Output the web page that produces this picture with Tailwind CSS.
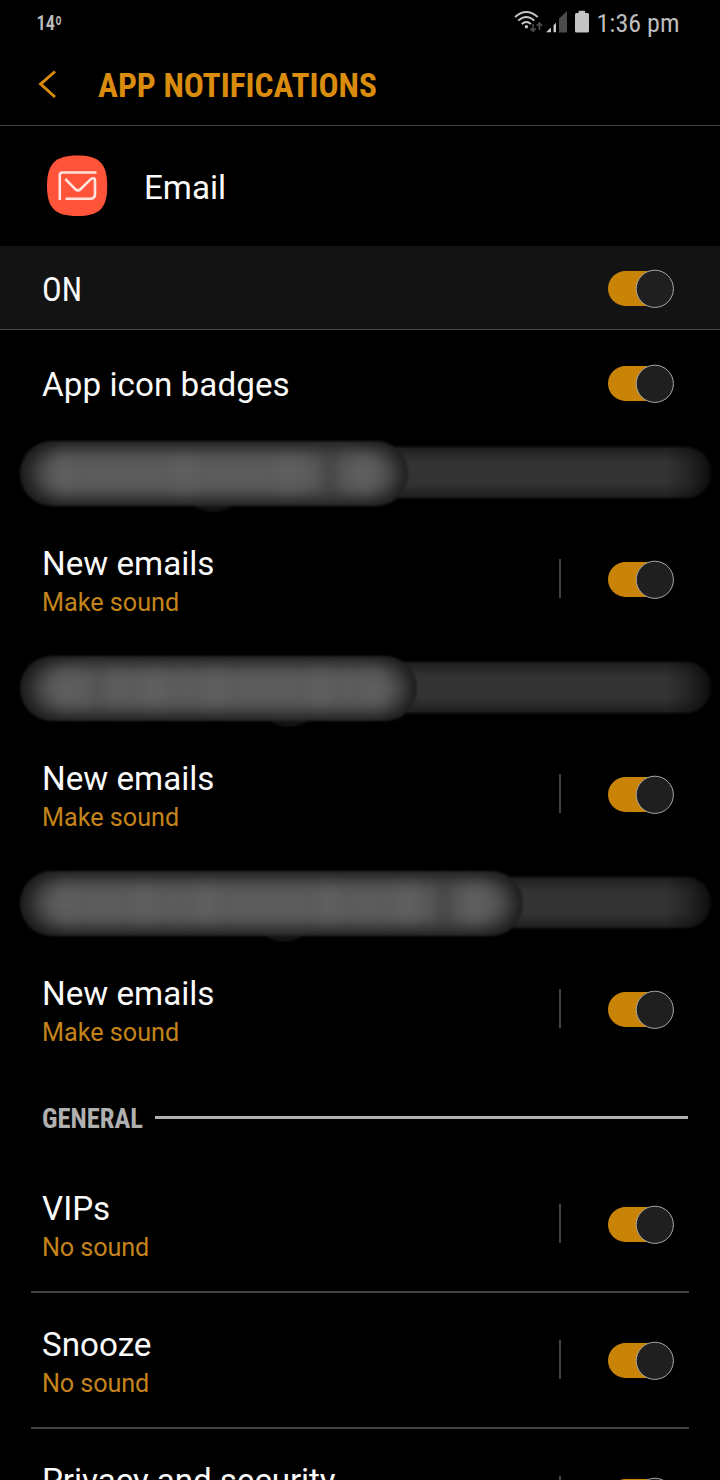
<!DOCTYPE html>
<html lang="en">
<head>
<meta charset="utf-8">
<title>App notifications</title>
<script src="https://cdn.jsdelivr.net/npm/@tailwindcss/browser@4"></script>
</head>
<body class="bg-black">
<svg width="0" height="0" class="absolute">
  <defs>
    <linearGradient id="barH" gradientUnits="userSpaceOnUse" x1="300" y1="0" x2="712" y2="0">
      <stop offset="0" stop-color="#333"/><stop offset=".89" stop-color="#333"/><stop offset=".95" stop-color="#222"/><stop offset="1" stop-color="#0c0c0c"/>
    </linearGradient>
    <linearGradient id="barV" x1="0" y1="0" x2="0" y2="1">
      <stop offset="0" stop-color="#000" stop-opacity=".4"/><stop offset=".3" stop-color="#000" stop-opacity="0"/><stop offset=".7" stop-color="#000" stop-opacity="0"/><stop offset="1" stop-color="#000" stop-opacity=".4"/>
    </linearGradient>
    <filter id="soft" x="-5%" y="-20%" width="110%" height="140%" color-interpolation-filters="sRGB"><feGaussianBlur stdDeviation="1.2"/></filter>
    <filter id="glow" x="-10%" y="-60%" width="120%" height="220%" color-interpolation-filters="sRGB"><feGaussianBlur stdDeviation="12 9"/></filter>
    <filter id="streak" x="-100%" y="-60%" width="300%" height="220%" color-interpolation-filters="sRGB"><feGaussianBlur stdDeviation="7"/></filter>
    <symbol id="toggle" viewBox="0 0 67 40">
      <rect x="1" y="3.100" width="56" height="34.8" rx="17.4" fill="#c98407"/>
      <circle cx="47.8" cy="20.8" r="18.6" fill="#1f1f1f" stroke="#a8a8a8" stroke-width="1"/>
    </symbol>
  </defs>
</svg>
<main class="w-[720px] h-[1480px] overflow-hidden bg-black text-[#fafafa] font-['Roboto',sans-serif] flex flex-col [&>*]:shrink-0">
  <div class="h-[47px] flex justify-between">
    <svg width="120" height="47" font-family="'Roboto Condensed',Roboto,sans-serif" fill="#bdbdbd"><text x="36.500" y="30" font-size="19.5" font-weight="600" textLength="18.500" lengthAdjust="spacingAndGlyphs">14</text><text x="55" y="32" font-size="23" font-weight="500" textLength="7" lengthAdjust="spacingAndGlyphs">º</text></svg>
    <svg width="220" height="47">
      <g fill="none" stroke="#c4c4c4" stroke-width="1.9">
        <path d="M15 17Q26.3 6.800 37.700 17"/><path d="M18.300 20.600Q26.300 13.300 34.300 20.600"/><path d="M21.800 24Q26.300 20 30.900 24"/>
      </g>
      <circle cx="26.400" cy="26.700" r="1.700" fill="#c4c4c4"/>
      <g fill="none" stroke="#4b4b4b" stroke-width="1.700"><path d="M33 24v7M30.300 28.300l2.700 2.900 2.700-2.900M39.500 30v-7M36.800 25.900l2.700-2.900 2.700 2.900"/></g>
      <path d="M46 32.300L51 27.500V32.300ZM53.500 25.200L56 22.700V32.300H53.500Z" fill="#c8c8c8"/>
      <path d="M59 18.500L67 11V32.500H59Z" fill="#4b4b4b"/>
      <path d="M75 14.500q0-1.500 1.500-1.500H78.500V12q0-1.200 1.200-1.200H84q1.200 0 1.200 1.200V13H87.500q1.500 0 1.500 1.500V31q0 1.500-1.500 1.500H76.500q-1.500 0-1.500-1.500Z" fill="#c4c4c4"/>
      <text x="96.500" y="32" font-family="'Roboto Condensed',Roboto,sans-serif" font-size="26.5" fill="#bdbdbd" textLength="83" lengthAdjust="spacingAndGlyphs">1:36 pm</text>
    </svg>
  </div>
  <header class="h-[79px] border-b border-[#444]">
    <svg width="400" height="78">
      <path d="M55 24.500L40.600 37.100L55 50" fill="none" stroke="#d98c0d" stroke-width="2.900"/>
      <text x="98" y="50" font-family="'Roboto Condensed',Roboto,sans-serif" font-size="33" font-weight="700" fill="#d98c0d" textLength="279" lengthAdjust="spacingAndGlyphs">APP NOTIFICATIONS</text>
    </svg>
  </header>
  <section class="h-[120px] flex items-center pl-[46px]">
    <svg width="62" height="62" class="block">
      <path d="M31 .500C53 .500 61.200 8 61.200 31S53 61 31 61 1 53 1 31 9 .500 31 .500Z" fill="#ff543a"/>
      <g fill="none" stroke="#ffe3dc" stroke-width="2.600" stroke-linejoin="round" transform="translate(0 3.700)"><path d="M50.500 13.800H16.200Q13.800 13.800 13.800 16.200V41.300"/><path d="M19.300 20.300L29.500 30.600Q32 33 34.500 30.600L44.800 20.400Q49 18 49 21.900V35.200Q49 40 44 40H19.500"/></g>
    </svg>
    <div class="pl-[36px] pt-[3px] text-[33.200px] leading-10">Email</div>
  </section>
  <section class="h-[84px] bg-[#131313] border-b border-[#444] flex items-center justify-between pl-[42px] pr-[46px]">
    <svg width="60" height="50"><text x="0" y="38" font-family="'Roboto Condensed',Roboto,sans-serif" font-size="34" fill="#fafafa" textLength="40" lengthAdjust="spacingAndGlyphs">ON</text></svg>
    <svg width="67" height="40" class="mt-px"><use href="#toggle"/></svg>
  </section>
  <section class="h-[101px] flex items-center justify-between pl-[42px] pr-[46px] pt-[5px]">
    <div class="text-[33.200px] leading-10 tracking-[0.06px] pt-[3px]">App icon badges</div>
    <svg width="67" height="40"><use href="#toggle"/></svg>
  </section>

  <svg width="720" height="81" class="block">
    <clipPath id="c1"><rect x="20" y="10" width="388" height="65" rx="32"/></clipPath>
    <g filter="url(#soft)"><rect x="300" y="16" width="411" height="51" rx="25" fill="url(#barH)"/><rect x="300" y="16" width="411" height="51" rx="25" fill="url(#barV)"/>
    <circle cx="213" cy="49" r="32" fill="#131313"/>
    <g clip-path="url(#c1)"><rect x="20" y="10" width="388" height="65" fill="#161616"/><rect x="34" y="17" width="363" height="51" rx="25" fill="#5c5c5c" filter="url(#glow)"/>
    <g fill="#6c6c6c" opacity=".25" filter="url(#streak)"><rect x="56" y="24" width="14" height="38"/><rect x="175" y="24" width="20" height="38"/><rect x="278" y="24" width="20" height="38"/><rect x="358" y="24" width="14" height="38"/></g>
    <rect x="320" y="14" width="20" height="58" fill="#2a2a2a" opacity=".4" filter="url(#streak)"/></g></g>
  </svg>
  <section class="h-[134px] flex items-center pl-[42px] pr-[46px]">
    <div class="flex-1 pt-[8px]"><div class="text-[33.200px] leading-10">New emails</div><div class="text-[25.200px] leading-[38px] text-[#c4841b]">Make sound</div></div>
    <div class="w-[2px] h-[39px] bg-[#424242] mr-[46px] mb-[2px]"></div><svg width="67" height="40"><use href="#toggle"/></svg>
  </section>

  <svg width="720" height="81" class="block">
    <clipPath id="c2"><rect x="20" y="10" width="397" height="65" rx="32"/></clipPath>
    <g filter="url(#soft)"><rect x="300" y="16" width="411" height="51" rx="25" fill="url(#barH)"/><rect x="300" y="16" width="411" height="51" rx="25" fill="url(#barV)"/>
    <circle cx="289" cy="49" r="32" fill="#131313"/>
    <g clip-path="url(#c2)"><rect x="20" y="10" width="397" height="65" fill="#161616"/><rect x="34" y="17" width="371" height="51" rx="25" fill="#5c5c5c" filter="url(#glow)"/>
    <g fill="#6c6c6c" opacity=".25" filter="url(#streak)"><rect x="60" y="24" width="12" height="38"/><rect x="145" y="24" width="20" height="38"/><rect x="205" y="24" width="20" height="38"/><rect x="310" y="24" width="20" height="38"/><rect x="368" y="24" width="14" height="38"/></g>
    <rect x="94" y="14" width="8" height="58" fill="#2a2a2a" opacity=".25" filter="url(#streak)"/></g></g>
  </svg>
  <section class="h-[134px] flex items-center pl-[42px] pr-[46px]">
    <div class="flex-1 pt-[8px]"><div class="text-[33.200px] leading-10">New emails</div><div class="text-[25.200px] leading-[38px] text-[#c4841b]">Make sound</div></div>
    <div class="w-[2px] h-[39px] bg-[#424242] mr-[46px] mb-[2px]"></div><svg width="67" height="40"><use href="#toggle"/></svg>
  </section>

  <svg width="720" height="81" class="block">
    <clipPath id="c3"><rect x="20" y="10" width="503" height="65" rx="32"/></clipPath>
    <g filter="url(#soft)"><rect x="300" y="16" width="411" height="51" rx="25" fill="url(#barH)"/><rect x="300" y="16" width="411" height="51" rx="25" fill="url(#barV)"/>
    <circle cx="284" cy="49" r="32" fill="#131313"/>
    <g clip-path="url(#c3)"><rect x="20" y="10" width="503" height="65" fill="#161616"/><rect x="34" y="17" width="477" height="51" rx="25" fill="#5c5c5c" filter="url(#glow)"/>
    <g fill="#6c6c6c" opacity=".25" filter="url(#streak)"><rect x="60" y="24" width="12" height="38"/><rect x="135" y="24" width="20" height="38"/><rect x="195" y="24" width="20" height="38"/><rect x="320" y="24" width="20" height="38"/><rect x="395" y="24" width="20" height="38"/><rect x="470" y="24" width="14" height="38"/></g>
    <rect x="435" y="14" width="18" height="58" fill="#2a2a2a" opacity=".4" filter="url(#streak)"/></g></g>
  </svg>
  <section class="h-[134px] flex items-center pl-[42px] pr-[46px]">
    <div class="flex-1 pt-[8px]"><div class="text-[33.200px] leading-10">New emails</div><div class="text-[25.200px] leading-[38px] text-[#c4841b]">Make sound</div></div>
    <div class="w-[2px] h-[39px] bg-[#424242] mr-[46px] mb-[2px]"></div><svg width="67" height="40"><use href="#toggle"/></svg>
  </section>

  <div class="h-[81px] flex items-center pl-[42px] pr-8">
    <svg width="113" height="50"><text x="0" y="36" font-family="'Roboto Condensed',Roboto,sans-serif" font-size="27" font-weight="700" fill="#b0b0b0" textLength="101" lengthAdjust="spacingAndGlyphs">GENERAL</text></svg>
    <div class="flex-1 h-[3px] mt-[2px] bg-[#b0b0b0]"></div>
  </div>
  <section class="h-[134px] flex items-center pl-[42px] pr-[46px]">
    <div class="flex-1 pt-[8px]"><div class="text-[33.200px] leading-10">VIPs</div><div class="text-[25.200px] leading-[38px] tracking-[-0.1px] text-[#c4841b]">No sound</div></div>
    <div class="w-[2px] h-[39px] bg-[#424242] mr-[46px] mb-[2px]"></div><svg width="67" height="40"><use href="#toggle"/></svg>
  </section>
  <div class="h-[2px] bg-[#424242] mx-[31px]"></div>
  <section class="h-[134px] flex items-center pl-[42px] pr-[46px]">
    <div class="flex-1 pt-[8px]"><div class="text-[33.200px] leading-10">Snooze</div><div class="text-[25.200px] leading-[38px] tracking-[-0.1px] text-[#c4841b]">No sound</div></div>
    <div class="w-[2px] h-[39px] bg-[#424242] mr-[46px] mb-[2px]"></div><svg width="67" height="40"><use href="#toggle"/></svg>
  </section>
  <div class="h-[2px] bg-[#424242] mx-[31px]"></div>
  <section class="h-[134px] flex items-start pl-[42px] pr-[46px]">
    <div class="flex-1 pt-[32px] tracking-[-0.08px] text-[33.200px] leading-10">Privacy and security</div>
    <div class="w-[2px] h-[39px] bg-[#424242] mr-[46px] mt-[47px]"></div><svg width="67" height="40" class="mt-[47px]"><use href="#toggle"/></svg>
  </section>
</main>
</body>
</html>
